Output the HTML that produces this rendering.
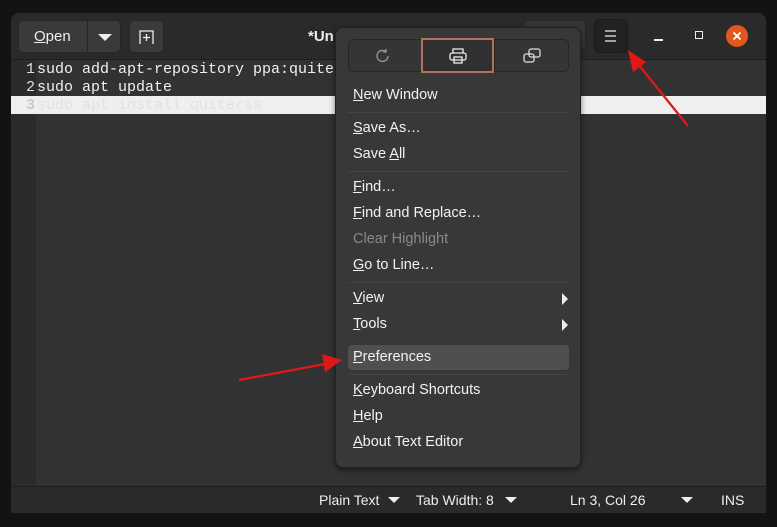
<!DOCTYPE html>
<html><head><meta charset="utf-8"><style>
*{margin:0;padding:0;box-sizing:border-box}
body{width:777px;height:527px;background:#131313;position:relative;overflow:hidden;font-family:"Liberation Sans",sans-serif;color:#eee}
.win{position:absolute;left:11px;top:13px;width:755px;height:500px;background:#2c2c2c;border-radius:8px 8px 0 0;overflow:hidden}
.hb{position:absolute;left:0;top:0;width:755px;height:47px;background:#2a2a2a;border-bottom:1px solid #1e1e1e}
.btn{position:absolute;background:#3a3a3a;border-radius:5px;border:1px solid #262626}
.ed{position:absolute;left:0;top:47px;width:755px;height:426px;background:#323232}
.gut{position:absolute;left:0;top:0;width:25px;height:426px;background:#2b2b2b}
.ln{position:absolute;left:0;height:18px;font:15px/18px "Liberation Mono",monospace;white-space:pre;color:#f0f0f0}
.ln .n{display:inline-block;width:24px;margin-right:2px;text-align:right;color:#ddd}
.cur{position:absolute;left:0;top:36px;width:755px;height:18px;background:#efefef}
.sb{position:absolute;left:0;top:473px;width:755px;height:27px;background:#2a2a2a;border-top:1px solid #1d1d1d;font-size:14px;color:#eee}
.sb span{position:absolute;top:5px}
.menu{position:absolute;left:335px;top:27px;width:246px;height:441px;background:#383838;border-radius:8px;border:1px solid #222;box-shadow:0 2px 6px rgba(0,0,0,.5)}
.it{position:absolute;left:17px;font-size:14.5px;color:#f2f2f2}
.sep{position:absolute;left:12px;width:220px;height:1px;background:#444}
.arr{position:absolute;right:12px;width:0;height:0;border-left:6px solid #eee;border-top:6px solid transparent;border-bottom:6px solid transparent}
</style></head><body>
<div class="win">
 <div class="hb">
  <div class="btn" style="left:7px;top:7px;width:103px;height:33px"></div>
  <div style="position:absolute;left:76px;top:8px;width:1px;height:31px;background:#262626"></div>
  <div style="position:absolute;left:23px;top:15px;font-size:15px;color:#eee"><u>O</u>pen</div>
  <div style="position:absolute;left:87px;top:21px;border-top:7px solid #eee;border-left:7px solid transparent;border-right:7px solid transparent"></div>
  <div class="btn" style="left:118px;top:7px;width:35px;height:33px"></div>
  <svg style="position:absolute;left:127px;top:15px" width="18" height="18" viewBox="0 0 18 18" fill="none" stroke="#eee" stroke-width="1.3"><path d="M2 16V3h13v13"/><path d="M8.5 6v7M5 9.5h7"/></svg>
  <div style="position:absolute;left:297px;top:15px;font-size:15px;font-weight:bold">*Un</div>
  <div class="btn" style="left:512px;top:7px;width:63px;height:30px;background:#353535"></div>
  <div class="btn" style="left:583px;top:6px;width:34px;height:34px;background:#222;border-color:#1a1a1a"></div>
  <svg style="position:absolute;left:592px;top:16px" width="16" height="14"><path d="M2 2h11M2 7h11M2 12h11" stroke="#eee" stroke-width="1.3"/></svg>
  <div style="position:absolute;left:643px;top:26px;width:9px;height:1.5px;background:#eee"></div>
  <div style="position:absolute;left:684px;top:18px;width:8px;height:8px;border:1.5px solid #eee"></div>
  <div style="position:absolute;left:715px;top:12px;width:22px;height:22px;border-radius:50%;background:#e2571e"></div>
  <svg style="position:absolute;left:715px;top:12px" width="22" height="22"><path d="M7.5 7.5l7 7M14.5 7.5l-7 7" stroke="#fff" stroke-width="1.8"/></svg>
 </div>
 <div class="ed">
  <div class="gut"></div>
  <div class="cur"></div>
  <div class="ln" style="top:1px"><span class="n">1</span>sudo add-apt-repository ppa:quiterss/quiterss</div>
  <div class="ln" style="top:19px"><span class="n">2</span>sudo apt update</div>
  <div class="ln" style="top:37px"><span class="n" style="color:#c8c8c8;font-weight:bold">3</span><span style="color:#e2e2e2">sudo apt install quiterss</span></div>
 </div>
 <div class="sb">
  <span style="left:308px">Plain Text</span>
  <div style="position:absolute;left:377px;top:10px;border-top:6px solid #eee;border-left:6px solid transparent;border-right:6px solid transparent"></div>
  <span style="left:405px">Tab Width: 8</span>
  <div style="position:absolute;left:494px;top:10px;border-top:6px solid #eee;border-left:6px solid transparent;border-right:6px solid transparent"></div>
  <span style="left:559px">Ln 3, Col 26</span>
  <div style="position:absolute;left:670px;top:10px;border-top:6px solid #eee;border-left:6px solid transparent;border-right:6px solid transparent"></div>
  <span style="left:710px">INS</span>
 </div>
</div>
<div class="menu">
 <div style="position:absolute;left:12px;top:11px;width:221px;height:33px;background:#353535;border:1px solid #262626;border-radius:5px"></div>
 <div style="position:absolute;left:85px;top:10px;width:73px;height:35px;border:2px solid #b0735a;background:#303030"></div>
 <div style="position:absolute;left:158px;top:12px;width:1px;height:31px;background:#262626"></div>
 <svg style="position:absolute;left:38px;top:19px" width="18" height="18" fill="none" stroke="#999" stroke-width="1.3"><path d="M14 9a5.5 5.5 0 1 1-2-4.3"/><path d="M12 2v3h-3"/></svg>
 <svg style="position:absolute;left:112px;top:18px" width="20" height="20" fill="none" stroke="#eee" stroke-width="1.3"><path d="M5 7V3h10v4"/><rect x="2" y="7" width="16" height="7" rx="2"/><rect x="6" y="11" width="8" height="6"/></svg>
 <svg style="position:absolute;left:186px;top:19px" width="20" height="18" fill="none" stroke="#ddd" stroke-width="1.3"><rect x="7" y="2" width="11" height="8" rx="2"/><rect x="2" y="7" width="10" height="8" rx="2"/></svg>
 <div class="it" style="top:59px"><u>N</u>ew Window</div>
 <div class="sep" style="top:84px"></div>
 <div class="it" style="top:92px"><u>S</u>ave As…</div>
 <div class="it" style="top:118px">Save <u>A</u>ll</div>
 <div class="sep" style="top:143px"></div>
 <div class="it" style="top:151px"><u>F</u>ind…</div>
 <div class="it" style="top:177px"><u>F</u>ind and Replace…</div>
 <div class="it" style="top:203px;color:#8a8a8a">Clear Highlight</div>
 <div class="it" style="top:229px"><u>G</u>o to Line…</div>
 <div class="sep" style="top:254px"></div>
 <div class="it" style="top:262px"><u>V</u>iew</div><div class="arr" style="top:265px"></div>
 <div class="it" style="top:288px"><u>T</u>ools</div><div class="arr" style="top:291px"></div>
 <div style="position:absolute;left:12px;top:317px;width:221px;height:25px;background:#4f4f4f;border-radius:4px"></div>
 <div class="it" style="top:321px"><u>P</u>references</div>
 <div class="sep" style="top:346px"></div>
 <div class="it" style="top:354px"><u>K</u>eyboard Shortcuts</div>
 <div class="it" style="top:380px"><u>H</u>elp</div>
 <div class="it" style="top:406px"><u>A</u>bout Text Editor</div>
</div>
<svg style="position:absolute;left:0;top:0" width="777" height="527">
 <g stroke="#e01818" stroke-width="2.2" fill="#e01818">
  <line x1="688" y1="126" x2="638" y2="64"/><polygon points="628,50 646,62 633,72" stroke="none"/>
  <line x1="239" y1="380" x2="325" y2="364"/><polygon points="342,360 322,354 325,372" stroke="none"/>
 </g>
</svg>
</body></html>
